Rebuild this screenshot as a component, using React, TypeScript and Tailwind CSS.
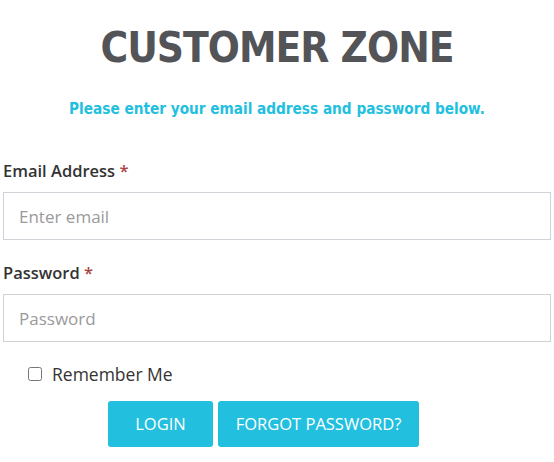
export default function App() {
  return (
    <div className="w-[554px] h-[462px] bg-white px-[3px] font-['Open_Sans',sans-serif] text-[#333]">
      <h1 className="pt-[22px] text-center text-[42px] leading-[52px] font-bold tracking-[-1px] text-[#535458] font-['DejaVu_Sans_Condensed','DejaVu_Sans',sans-serif]">
        CUSTOMER ZONE
      </h1>
      <p className="mt-[24px] text-center text-[15.2px] leading-[22px] font-bold text-[#22bfdf] font-['DejaVu_Sans_Condensed','DejaVu_Sans',sans-serif]">
        Please enter your email address and password below.
      </p>
      <form className="mt-[39px]">
        <label className="block text-[16.5px] leading-[24px] font-semibold">
          Email Address <span className="text-[#a94442]">*</span>
        </label>
        <input
          type="email"
          placeholder="Enter email"
          className="mt-[9px] block w-full h-[48px] border border-[#cfd3d8] px-[15px] text-[17px] placeholder:text-[#9a9a9a] outline-none"
        />
        <label className="mt-[21px] block text-[16.5px] leading-[24px] font-semibold">
          Password <span className="text-[#a94442]">*</span>
        </label>
        <input
          type="password"
          placeholder="Password"
          className="mt-[9px] block w-full h-[48px] border border-[#cfd3d8] px-[15px] text-[17px] placeholder:text-[#9a9a9a] outline-none"
        />
        <label className="mt-[20px] ml-[25px] flex items-center gap-[10px] text-[17.5px] leading-[24px]">
          <input type="checkbox" className="w-[14px] h-[14px]" />
          Remember Me
        </label>
        <div className="mt-[15px] ml-[105px] flex gap-[5px]">
          <button type="button" className="h-[46px] w-[105px] rounded-[3px] bg-[#22bfdf] text-white text-[16.5px]">
            LOGIN
          </button>
          <button type="button" className="h-[46px] w-[201px] rounded-[3px] bg-[#22bfdf] text-white text-[16.5px]">
            FORGOT PASSWORD?
          </button>
        </div>
      </form>
    </div>
  );
}
